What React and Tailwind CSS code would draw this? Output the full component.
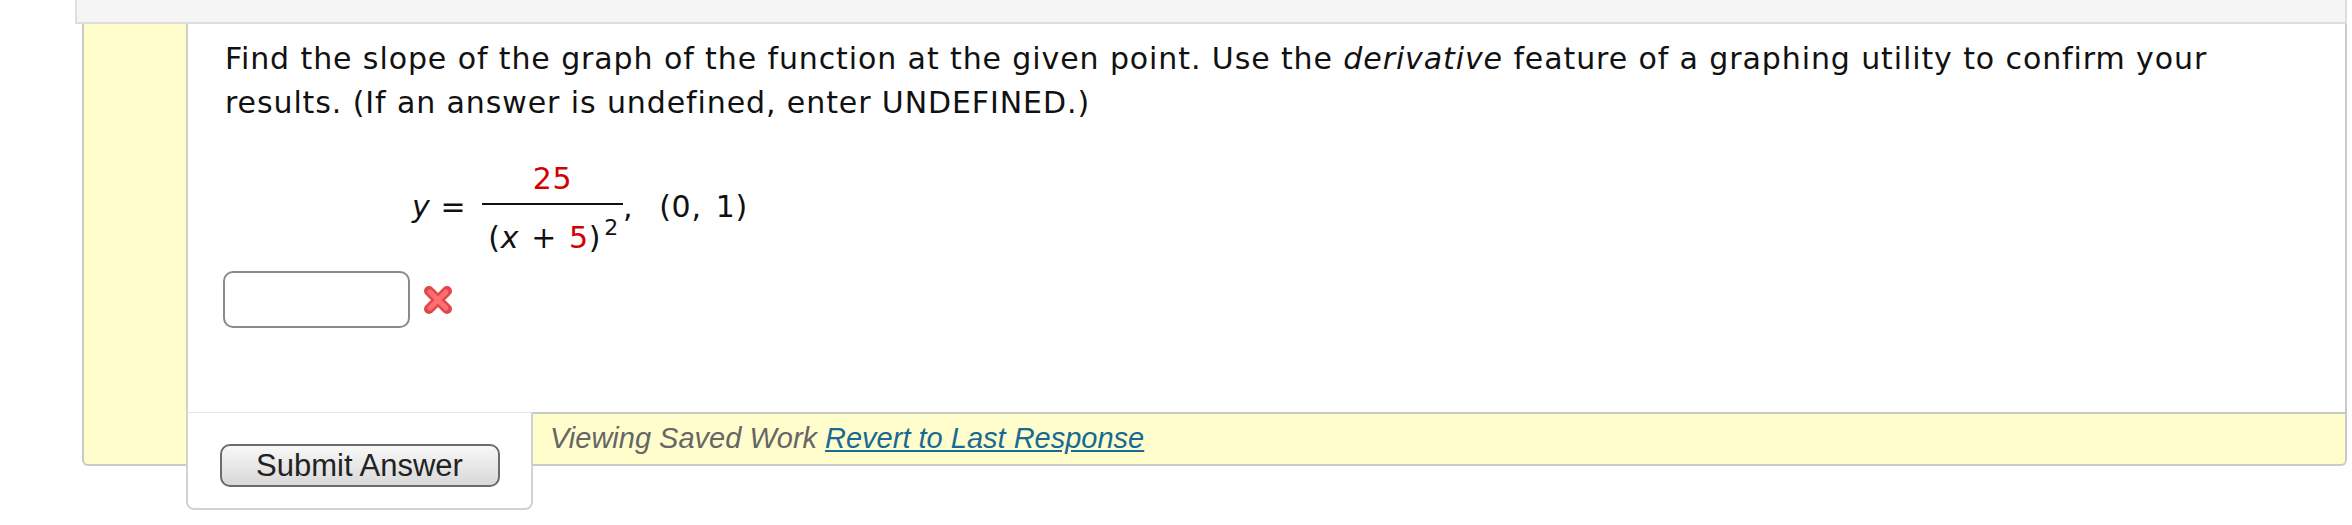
export default function App() {
  return (
    <div className="min-h-[525px] bg-white pl-[75px] pr-[5px] font-['DejaVu_Sans',Verdana,sans-serif] text-[#111]">
      <div className="h-[24px] border-x-2 border-b-2 border-[#dedede] bg-[#f5f5f5]" />

      <div className="ml-[7px] flex rounded-b-[6px] border-x-2 border-b-2 border-[#cacaca] bg-[#fffdcc]">
        <div className="w-[102px] shrink-0" />

        <div className="flex min-w-0 flex-1 flex-col">
          <div className="h-[388px] border-l-2 border-[#cfcfcf] bg-white pl-[37px] pr-[80px] pt-[13px]">
            <p className="text-[30px] leading-[44px] tracking-[0.9px]">
              Find the slope of the graph of the function at the given point. Use the <i>derivative</i> feature of a
              graphing utility to confirm your results. (If an answer is undefined, enter UNDEFINED.)
            </p>

            <div className="ml-[187px] mt-[37px] flex items-start text-[30px] tracking-[0.7px]">
              <span className="mt-[28px] whitespace-nowrap leading-[34px]">
                <i>y</i>
                <span className="ml-[10px]">=</span>
              </span>
              <div className="ml-[16px] flex flex-col items-stretch">
                <div className="text-center leading-[34px] text-[#d40000]">25</div>
                <div className="mt-[7px] h-[2px] bg-[#111]" />
                <div className="mt-[13px] whitespace-nowrap pl-[6px] pr-[4px] leading-[40px]">
                  (<i>x</i>
                  <span className="mx-[12px]">+</span>
                  <span className="text-[#d40000]">5</span>)
                  <span className="relative top-[-13px] ml-[3px] text-[22px]">2</span>
                </div>
              </div>
              <span className="mt-[28px] whitespace-nowrap leading-[34px]">
                ,<span className="ml-[26px]">(0,</span>
                <span className="ml-[14px]">1)</span>
              </span>
            </div>

            <div className="-ml-[2px] mt-[10px] flex items-center gap-[13px]">
              <div className="h-[57px] w-[187px] rounded-[10px] border-2 border-[#8a8a8a] bg-white" />
              <svg width="30" height="28" viewBox="0 0 30 28">
                <path d="M6 5 L24 23 M24 5 L6 23" stroke="#e3454a" strokeWidth="10" strokeLinecap="round" />
                <path d="M7 6 L23 22 M23 6 L7 22" stroke="#ff6e70" strokeWidth="5" strokeLinecap="round" />
              </svg>
            </div>
          </div>

          <div className="flex items-start">
            <div className="-mb-[46px] flex h-[98px] w-[347px] shrink-0 justify-center rounded-b-[8px] border-x-2 border-b-2 border-t border-[#d2d2d2] border-t-[#e6e6e6] bg-white pt-[31px]">
              <button className="h-[43px] w-[280px] rounded-[10px] border-2 border-[#6b6b6b] bg-gradient-to-b from-[#f8f8f8] to-[#d8d8d8] font-['Liberation_Sans',Arial,sans-serif] text-[31px] leading-none text-[#222]">
                Submit Answer
              </button>
            </div>
            <div className="flex h-[52px] flex-1 items-center border-t-2 border-[#c8c8c8] pl-[17px] font-['Liberation_Sans',Arial,sans-serif] text-[29px] italic">
              <span className="text-[#666]">Viewing Saved Work</span>
              <a href="#" className="ml-[8px] text-[#176a95] underline">
                Revert to Last Response
              </a>
            </div>
          </div>
        </div>
      </div>
    </div>
  );
}
